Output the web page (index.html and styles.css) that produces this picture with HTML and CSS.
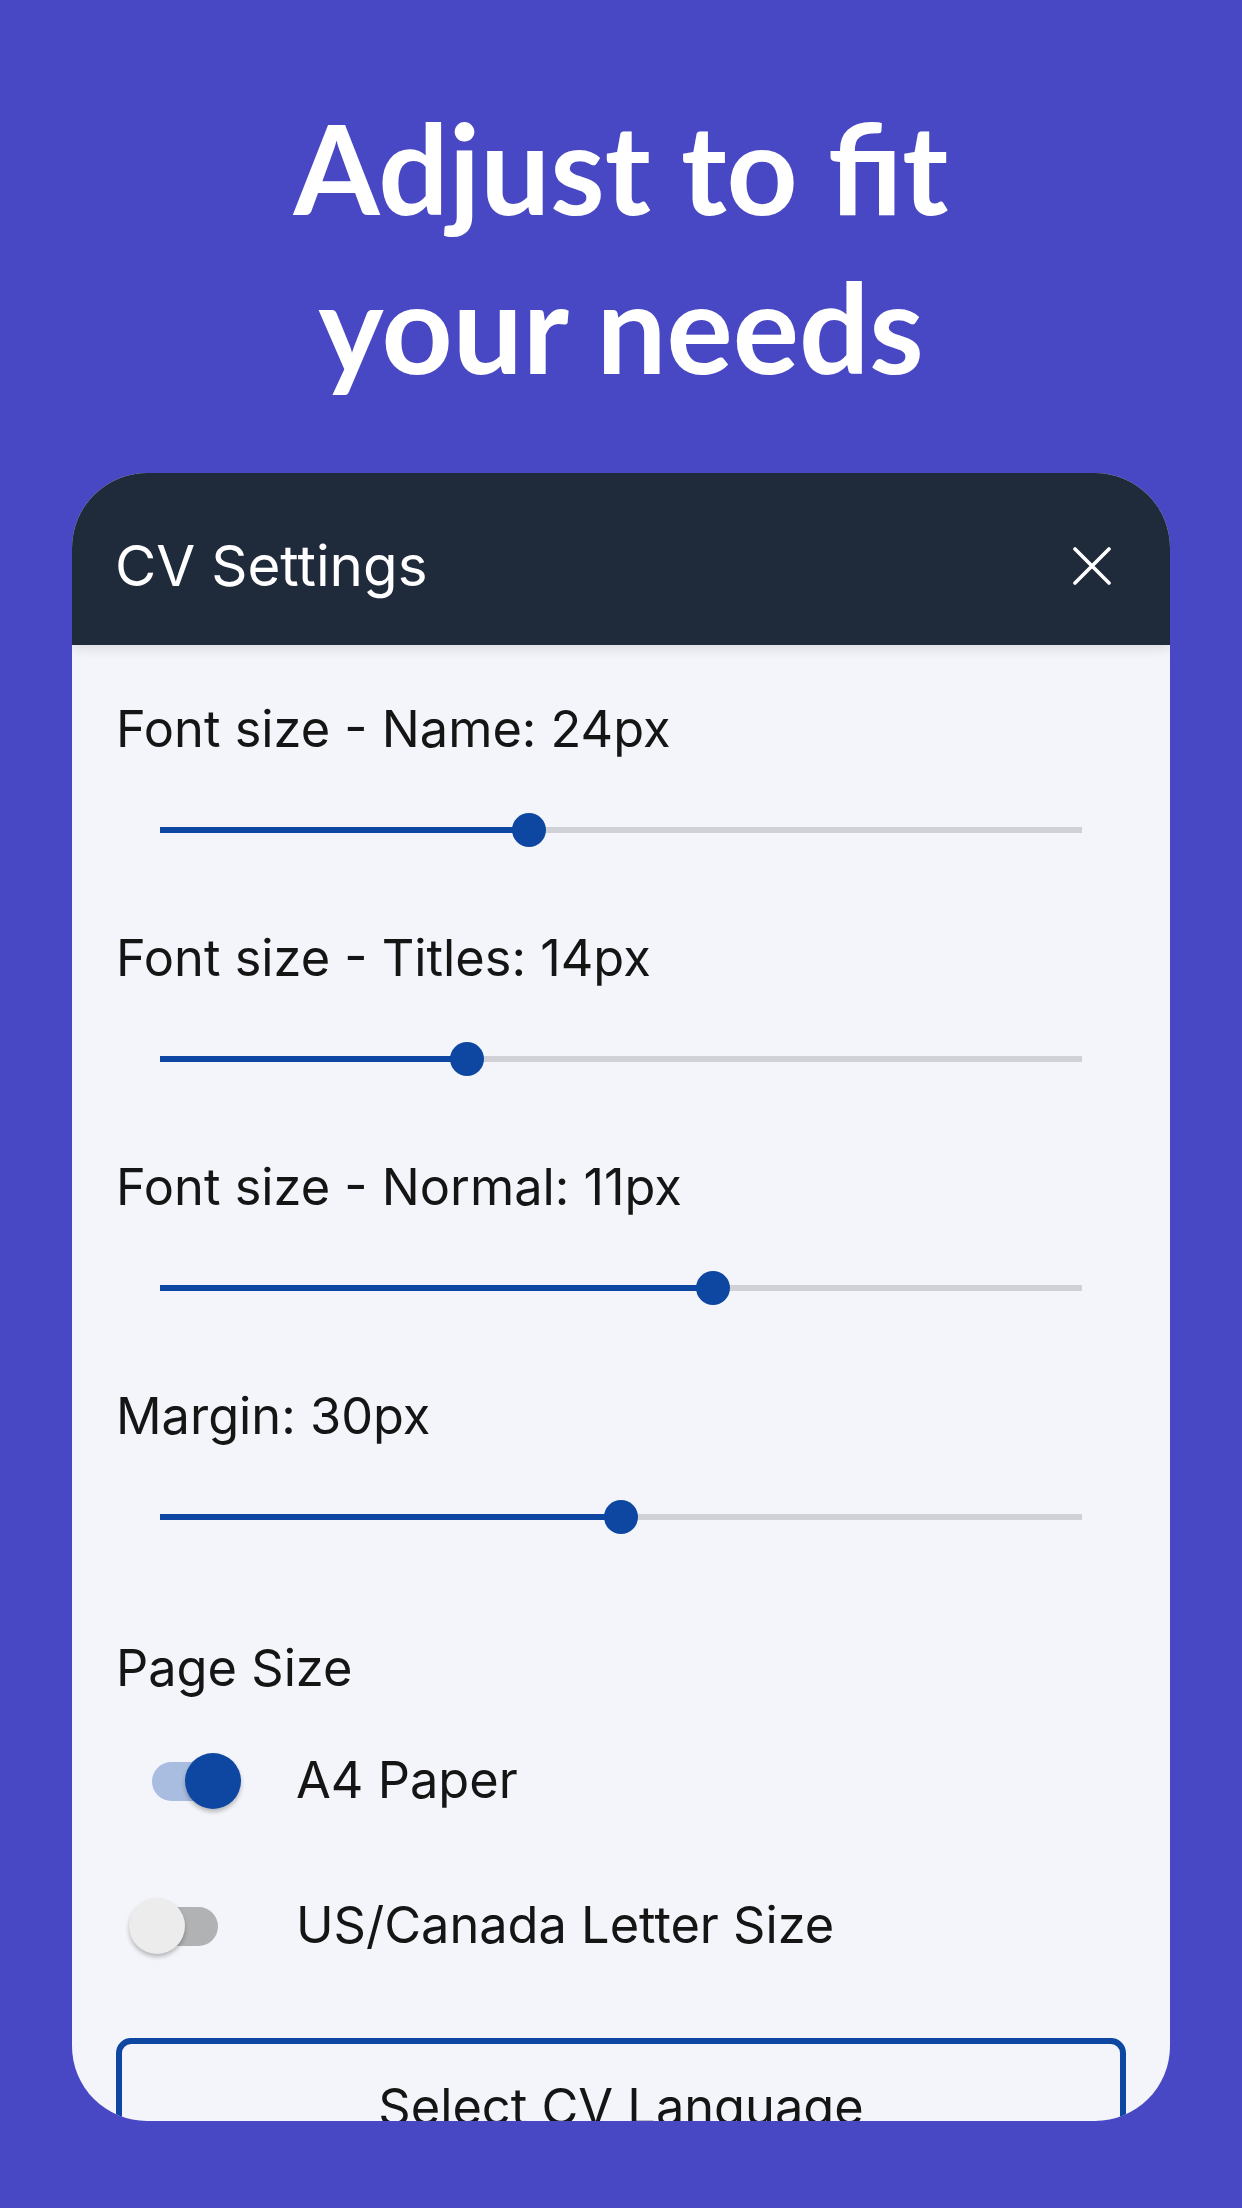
FILE: index.html
```html
<!DOCTYPE html>
<html lang="en">
<head>
<meta charset="utf-8">
<title>CV Settings</title>
<link rel="stylesheet" href="styles.css">
</head>
<body>
<div class="screen">
  <h1 class="headline">Adjust to fit<br>your needs</h1>
  <div class="card">
    <span class="notch"></span>
    <header class="card-header">
      <span class="card-title">CV Settings</span>
      <svg class="close" width="38" height="38" viewBox="0 0 38 38" aria-hidden="true">
        <path d="M2 2 L36 36 M36 2 L2 36" stroke="#ffffff" stroke-width="3.6" stroke-linecap="round" fill="none"/>
      </svg>
    </header>
    <div class="card-body">
      <div class="setting">
        <div class="label">Font size - Name: 24px</div>
        <div class="slider"><div class="track"><div class="fill" style="width:40%"></div><div class="thumb" style="left:40%"></div></div></div>
      </div>
      <div class="setting">
        <div class="label">Font size - Titles: 14px</div>
        <div class="slider"><div class="track"><div class="fill" style="width:33.3%"></div><div class="thumb" style="left:33.3%"></div></div></div>
      </div>
      <div class="setting">
        <div class="label">Font size - Normal: 11px</div>
        <div class="slider"><div class="track"><div class="fill" style="width:60%"></div><div class="thumb" style="left:60%"></div></div></div>
      </div>
      <div class="setting">
        <div class="label">Margin: 30px</div>
        <div class="slider"><div class="track"><div class="fill" style="width:50%"></div><div class="thumb" style="left:50%"></div></div></div>
      </div>
      <div class="label page-label">Page Size</div>
      <div class="option">
        <span class="switch on"><span class="switch-track"></span><span class="switch-thumb"></span></span>
        <span class="option-text">A4 Paper</span>
      </div>
      <div class="option">
        <span class="switch off"><span class="switch-track"></span><span class="switch-thumb"></span></span>
        <span class="option-text">US/Canada Letter Size</span>
      </div>
      <div class="lang-button">Select CV Language</div>
    </div>
  </div>
</div>
</body>
</html>
```

FILE: styles.css
```css
html, body {
  margin: 0;
  padding: 0;
}
body {
  background: #4948c4;
  width: 1242px;
  height: 2208px;
  overflow: hidden;
  font-family: Inter, "Noto Sans", sans-serif;
}
.screen {
  padding-top: 88px;
}
.headline {
  margin: 0;
  font-family: Lato, "Noto Sans", sans-serif;
  font-weight: 700;
  font-size: 124px;
  line-height: 159px;
  color: #ffffff;
  text-align: center;
}
.card {
  position: relative;
  margin: 67px 0 0 72px;
  width: 1098px;
  height: 1648px;
  border-radius: 75px;
  overflow: hidden;
  background: #f3f5fa;
}
.notch {
  position: absolute;
  top: 0;
  left: 944px;
  width: 34px;
  height: 2px;
  background: #8186b6;
}
.card-header {
  box-sizing: border-box;
  height: 172px;
  padding: 14px 59px 0 43px;
  background: #1f2a3a;
  display: flex;
  align-items: center;
  justify-content: space-between;
  box-shadow: 0 4px 12px rgba(0, 0, 0, 0.10);
  position: relative;
  z-index: 1;
}
.card-title {
  font-size: 56.5px;
  line-height: 1;
  color: #ffffff;
}
.close {
  display: block;
}
.card-body {
  padding: 58px 46px 0 46px;
}
.label {
  font-size: 50.5px;
  line-height: 51px;
  color: #151515;
  white-space: nowrap;
  margin-left: -2px;
}
.setting {
  margin-bottom: 26px;
}
.slider {
  height: 152px;
  margin: 0 42px;
  display: flex;
  align-items: center;
}
.track {
  position: relative;
  flex: 1;
  height: 6px;
  background: #cfd1d6;
}
.fill {
  height: 100%;
  background: #0d47a1;
}
.thumb {
  position: absolute;
  top: 50%;
  width: 34px;
  height: 34px;
  margin: -17px 0 0 -17px;
  border-radius: 50%;
  background: #0d47a1;
}
.page-label {
  margin-top: 49px;
  margin-bottom: 15px;
}
.option {
  height: 145px;
  display: flex;
  align-items: center;
}
.switch {
  position: relative;
  width: 112px;
  height: 56px;
  margin-left: 11px;
  margin-right: 55px;
  flex: none;
}
.switch-track {
  position: absolute;
  left: 23px;
  top: 9px;
  width: 66px;
  height: 39px;
  border-radius: 20px;
}
.switch-thumb {
  position: absolute;
  top: 0;
  width: 56px;
  height: 56px;
  border-radius: 50%;
  box-shadow: 0 3px 4px rgba(0, 0, 0, 0.25);
}
.switch.on .switch-track {
  background: #a9bde0;
}
.switch.on .switch-thumb {
  right: 0;
  background: #0d47a1;
}
.switch.off .switch-track {
  background: #b1b2b4;
}
.switch.off .switch-thumb {
  left: 0;
  background: #ececec;
}
.option-text {
  font-size: 50.5px;
  line-height: 1;
  color: #151515;
  white-space: nowrap;
}
.lang-button {
  margin: 40px -2px 0 -2px;
  height: 140px;
  border: 6px solid #0d47a1;
  border-radius: 15px;
  padding-top: 37px;
  box-sizing: border-box;
  text-align: center;
  font-size: 50.5px;
  line-height: 51px;
  color: #151515;
}
```
